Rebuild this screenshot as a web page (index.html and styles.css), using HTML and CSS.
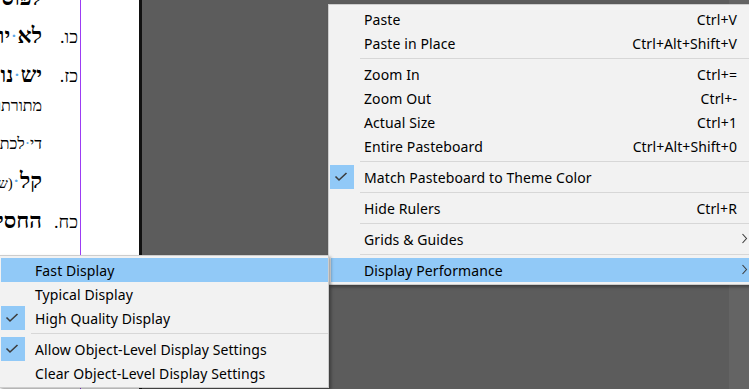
FILE: index.html
```html
<!DOCTYPE html>
<html lang="en">
<head>
    <meta charset="UTF-8">
    <title>Display Performance</title>
    <link rel="stylesheet" href="styles.css">
</head>
<body>
    <div class="screen">
        <div class="page">
            <div class="column" lang="he">
                <div class="line big l1"><span class="num"></span><span class="word">לפוסקים</span></div>
                <div class="line big l2"><span class="num">כו.</span><span class="word">לא<i>·</i>יוכל</span></div>
                <div class="line big l3"><span class="num">כז.</span><span class="word">יש<i>·</i>נוהגין</span></div>
                <div class="line small l4"><span class="num"></span><span class="word">מתורתו</span></div>
                <div class="line small l5"><span class="num"></span><span class="word">די<i>·</i>לכתחלה</span></div>
                <div class="line big l6"><span class="num"></span><span class="word">קל<i>·</i><small>(ש"ך</small></span></div>
                <div class="line big l7"><span class="num">כח.</span><span class="word">החסיד</span></div>
            </div>
        </div>
        <div class="page-edge"></div>
        <div class="pasteboard"></div>
        <div class="panel"></div>

        <div class="menu main-menu">
            <div class="item"><span class="check"></span><span class="label">Paste</span><span class="key">Ctrl+V</span><span class="arrow"></span></div>
            <div class="item"><span class="check"></span><span class="label">Paste in Place</span><span class="key">Ctrl+Alt+Shift+V</span><span class="arrow"></span></div>
            <div class="sep"></div>
            <div class="item"><span class="check"></span><span class="label">Zoom In</span><span class="key">Ctrl+=</span><span class="arrow"></span></div>
            <div class="item"><span class="check"></span><span class="label">Zoom Out</span><span class="key">Ctrl+-</span><span class="arrow"></span></div>
            <div class="item"><span class="check"></span><span class="label">Actual Size</span><span class="key">Ctrl+1</span><span class="arrow"></span></div>
            <div class="item"><span class="check"></span><span class="label">Entire Pasteboard</span><span class="key">Ctrl+Alt+Shift+0</span><span class="arrow"></span></div>
            <div class="sep"></div>
            <div class="item"><span class="check on"><svg width="24" height="24" viewBox="0 0 24 24"><polyline points="5.5,11.5 9,15 16.5,8" /></svg></span><span class="label">Match Pasteboard to Theme Color</span><span class="key"></span><span class="arrow"></span></div>
            <div class="sep"></div>
            <div class="item"><span class="check"></span><span class="label">Hide Rulers</span><span class="key">Ctrl+R</span><span class="arrow"></span></div>
            <div class="sep"></div>
            <div class="item"><span class="check"></span><span class="label">Grids &amp; Guides</span><span class="key"></span><span class="arrow"><svg width="8" height="24" viewBox="0 0 8 24"><polyline points="0.5,7 4.5,11.5 0.5,16" /></svg></span></div>
            <div class="sep"></div>
            <div class="item active"><span class="check"></span><span class="label">Display Performance</span><span class="key"></span><span class="arrow"><svg width="8" height="24" viewBox="0 0 8 24"><polyline points="0.5,7 4.5,11.5 0.5,16" /></svg></span></div>
        </div>

        <div class="menu sub-menu">
            <div class="item active"><span class="check"></span><span class="label">Fast Display</span></div>
            <div class="item"><span class="check"></span><span class="label">Typical Display</span></div>
            <div class="item"><span class="check on"><svg width="24" height="24" viewBox="0 0 24 24"><polyline points="5.5,11.5 9,15 16.5,8" /></svg></span><span class="label">High Quality Display</span></div>
            <div class="sep"></div>
            <div class="item"><span class="check on"><svg width="24" height="24" viewBox="0 0 24 24"><polyline points="5.5,11.5 9,15 16.5,8" /></svg></span><span class="label">Allow Object-Level Display Settings</span></div>
            <div class="item"><span class="check"></span><span class="label">Clear Object-Level Display Settings</span></div>
        </div>
    </div>
</body>
</html>
```

FILE: styles.css
```css
body {
    margin: 0;
    background-color: #5c5c5c;
    overflow: hidden;
}
.screen {
    position: relative;
    display: flex;
    width: 749px;
    height: 389px;
    overflow: hidden;
}
.page {
    width: 139px;
    height: 100%;
    background-color: #fff;
}
.column {
    width: 80px;
    height: 100%;
    border-right: 1px solid #9c3cf4;
    direction: rtl;
    overflow: hidden;
    font-family: "Liberation Serif", "DejaVu Sans", serif;
    color: #000;
}
.line {
    white-space: nowrap;
    line-height: 1;
}
.line i {
    font-style: normal;
    color: #5aa8e8;
    font-weight: normal;
}
.line small {
    font-size: 14px;
    font-weight: normal;
}
.big {
    font-size: 22px;
}
.big .word {
    font-weight: bold;
}
.small {
    font-size: 16px;
}
.num {
    display: inline-block;
    width: 38px;
    padding-right: 2px;
    box-sizing: border-box;
    font-size: 18px;
    font-weight: normal;
}
.l1 { margin-top: -13px; }
.l2 { margin-top: 16px; }
.l3 { margin-top: 17px; }
.l4 { margin-top: 12px; }
.l5 { margin-top: 22px; }
.l6 { margin-top: 18px; }
.l7 { margin-top: 18px; }
.page-edge {
    width: 3px;
    height: 100%;
    background-color: #111;
}
.pasteboard {
    flex: 1;
    height: 100%;
    background-color: #5c5c5c;
}
.panel {
    width: 20px;
    height: 100%;
    background-color: #646464;
}

/* context menus */
.menu {
    position: absolute;
    box-sizing: border-box;
    background-color: #f2f2f2;
    border: 1px solid #cdcdcd;
    padding: 2px 0;
    font-family: "Noto Sans", "Open Sans", sans-serif;
    font-size: 14px;
    letter-spacing: 0.1px;
    color: #000;
    box-shadow: 2px 2px 3px rgba(0, 0, 0, 0.35);
}
.main-menu {
    left: 328px;
    top: 4px;
    width: 442px;
}
.sub-menu {
    left: -1px;
    top: 255px;
    width: 330px;
}
.item {
    display: grid;
    grid-template-columns: 33px 1fr auto 30px;
    align-items: start;
    box-sizing: border-box;
    height: 24px;
    padding-top: 1px;
    line-height: 24px;
    margin: 0 2px;
    white-space: nowrap;
}
.sub-menu .item {
    grid-template-columns: 34px 1fr;
    margin: 0 0 0 1px;
}
.item.active {
    background-color: #91c9f7;
}
.check {
    width: 24px;
    height: 24px;
    margin: -1px 0 0 -1px;
}
.sub-menu .check {
    margin-left: 0;
}
.check.on {
    background-color: #91c9f7;
}
.check svg, .arrow svg {
    display: block;
    fill: none;
    stroke: #3c3c3c;
    stroke-width: 1.6;
}
.arrow {
    padding-left: 5px;
    margin-top: -1px;
}
.arrow svg {
    stroke-width: 1.1;
}
.key {
    text-align: right;
}
.sep {
    height: 1px;
    margin: 3px 0 3px 31px;
    background-color: #d7d7d7;
}
```
